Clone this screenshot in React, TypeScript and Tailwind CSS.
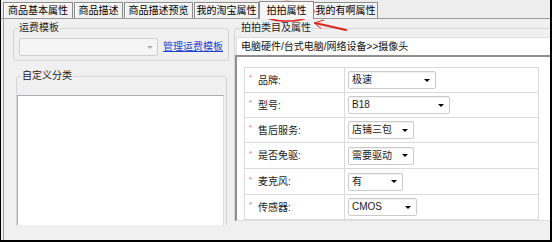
const tabs = [
  { label: "商品基本属性", w: "w-[70px]" },
  { label: "商品描述", w: "w-[49px]" },
  { label: "商品描述预览", w: "w-[69px]" },
  { label: "我的淘宝属性", w: "w-[65px]" },
];

const rows = [
  { label: "品牌:", value: "极速", w: "w-[88px]", h: "h-[25px]" },
  { label: "型号:", value: "B18", w: "w-[102px]", h: "h-[25px]" },
  { label: "售后服务:", value: "店铺三包", w: "w-[66px]", h: "h-[25px]" },
  { label: "是否免驱:", value: "需要驱动", w: "w-[66px]", h: "h-[26px]" },
  { label: "麦克风:", value: "有", w: "w-[55px]", h: "h-[26px]" },
  { label: "传感器:", value: "CMOS", w: "w-[69px]", h: "h-[25px]" },
];

function Select({ value, w }: { value: string; w: string }) {
  return (
    <div className={`${w} h-[18px] bg-white border border-[#cacaca] rounded-[2px] flex items-center justify-between pl-[3px] pr-[5px] shadow-[inset_0_1px_1px_rgba(0,0,0,0.06)]`}>
      <span className="text-[#1b1b1b] leading-[16px]">{value}</span>
      <span className="w-0 h-0 border-l-[3px] border-r-[3px] border-t-[3px] border-l-transparent border-r-transparent border-t-black" />
    </div>
  );
}

export default function App() {
  return (
    <div className="relative w-[552px] h-[242px] overflow-hidden bg-[#f0f0f0] border-l border-r-2 border-b-2 border-black font-['Liberation_Sans','Noto_Sans_CJK_SC',sans-serif] text-[10px] text-black">
      {/* Tab strip */}
      <div className="flex items-end h-[19px] pl-[2px] pt-[2px] border-b border-[#9a9a9a] bg-[#ededed]">
        {tabs.map((t, i) => (
          <div
            key={t.label}
            className={`${t.w} ${i > 0 ? "ml-[1px]" : ""} h-[16px] flex items-center justify-center border border-b-0 border-[#8c8c8c] bg-[#f2f2f2] shadow-[inset_1px_1px_0_#ffffff] leading-[14px] pt-[1px]`}
          >
            {t.label}
          </div>
        ))}
        <div className="relative z-10 w-[55px] h-[18px] -mb-[1px] flex items-center justify-center border border-b-0 border-[#8c8c8c] bg-[#f7f7f7] leading-[14px]">
          拍拍属性
        </div>
        <div className="w-[64px] h-[16px] flex items-center justify-center border border-b-0 border-l-0 border-[#8c8c8c] bg-[#f2f2f2] shadow-[inset_1px_1px_0_#ffffff] leading-[14px] pt-[1px]">
          我的有啊属性
        </div>
      </div>

      {/* Panel body */}
      <div className="flex h-[221px] ml-[2px] border-l border-[#a0a0a0]">
        {/* Left column */}
        <div className="w-[230px] h-[206px] overflow-hidden">
          <fieldset className="mt-[2px] ml-[9px] w-[216px] border border-[#d6d6d6] rounded-[3px] pb-[4px]">
            <legend className="ml-[4px] px-[1px] leading-[14px] text-[#222]">运费模板</legend>
            <div className="flex items-center mt-[3px] pl-[5px] gap-[5px]">
              <div className="w-[139px] h-[18px] bg-[#f5f5f5] border border-[#d0d0d0] rounded-[2px] flex items-center justify-end pr-[4px]">
                <span className="w-0 h-0 border-l-[3px] border-r-[3px] border-t-[3px] border-l-transparent border-r-transparent border-t-[#b0b0b0]" />
              </div>
              <a href="#" className="text-[#1c3fd0] underline leading-[14px]">管理运费模板</a>
            </div>
          </fieldset>

          <fieldset className="mt-[8px] ml-[12px] w-[211px] border border-[#d6d6d6] rounded-[3px]">
            <legend className="ml-[4px] px-[1px] leading-[14px] text-[#222]">自定义分类</legend>
            <div className="mt-[12px] w-[207px] h-[150px] bg-white border border-[#a9aeb5] border-r-[#dcdcdc]" />
          </fieldset>
        </div>

        {/* Right column */}
        <div className="flex-1 min-w-0">
          <fieldset className="mt-[2px] border border-r-0 border-b-0 border-[#d6d6d6] rounded-tl-[3px] min-w-0">
            <legend className="ml-[5px] px-[1px] leading-[14px] text-[#222]">拍拍类目及属性</legend>
            <div className="mt-[2px] ml-[1px] h-[18px] bg-white border-t border-l border-[#dedede] pl-[4px] flex items-center text-[#111]">
              电脑硬件/台式电脑/网络设备&gt;&gt;摄像头
            </div>
            <div className="h-[166px] bg-white border-t-2 border-l-2 border-b border-t-[#8e8e8e] border-l-[#8e8e8e] border-b-[#d9e1ea] overflow-hidden">
              <div className="ml-[7px] mt-[10px] w-[295px] border-l border-t border-r border-[#dadada]">
                {rows.map((r) => (
                  <div key={r.label} className={`${r.h} flex border-b border-[#dadada]`}>
                    <div className="w-[100px] border-r border-[#dadada] flex items-center pl-[4px] text-[#222]">
                      <span className="text-[#f26b6b] text-[8px] -mt-[4px] w-[9px]">*</span>
                      <span>{r.label}</span>
                    </div>
                    <div className="flex-1 flex items-center pl-[3px]">
                      <Select value={r.value} w={r.w} />
                    </div>
                  </div>
                ))}
                {/* next row, scrolled out of view */}
                <div className="h-[25px] flex">
                  <div className="w-[100px] border-r border-[#dadada]" />
                </div>
              </div>
            </div>
          </fieldset>
        </div>
      </div>

      {/* Annotation: red circle and arrow */}
      <svg className="absolute left-0 top-0 pointer-events-none" width="552" height="242" viewBox="0 0 552 242">
        <ellipse cx="286" cy="11.3" rx="27" ry="9.8" fill="none" stroke="#e3231f" strokeWidth="1.5" />
        <path d="M345 30 L314 23" stroke="#e3231f" strokeWidth="2" strokeLinecap="round" fill="none" />
        <path d="M323 20 L313.5 23 L320 28.5" stroke="#e3231f" strokeWidth="1" fill="none" />
      </svg>
    </div>
  );
}
